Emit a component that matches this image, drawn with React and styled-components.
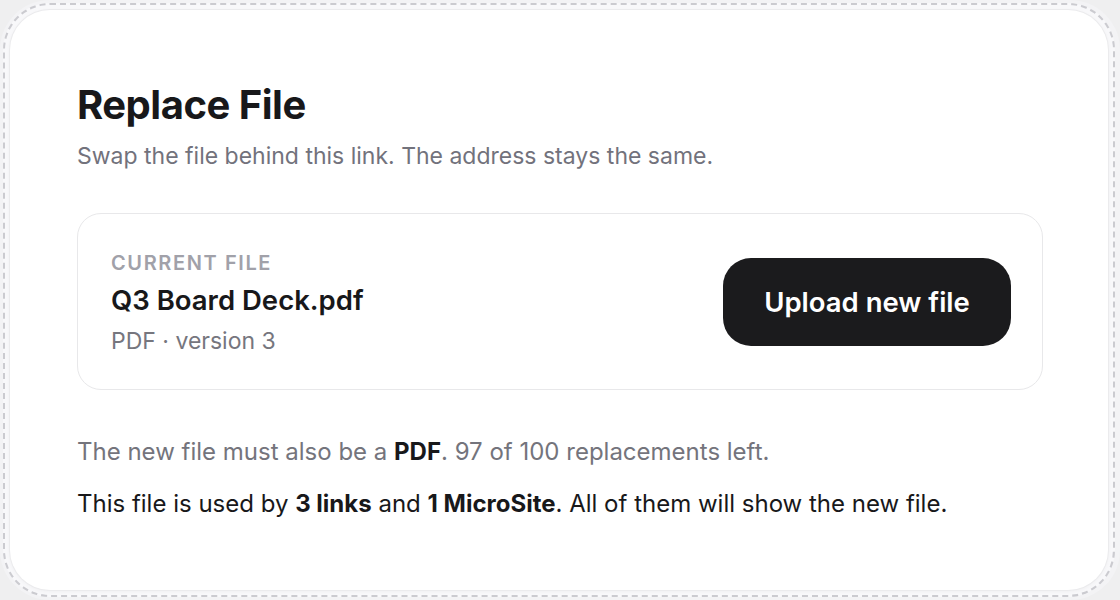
import React from "react";
import styled, { createGlobalStyle } from "styled-components";

const GlobalStyle = createGlobalStyle`
  html, body {
    margin: 0;
    padding: 0;
    background: #efeff0;
  }
  body {
    font-family: Inter, "Noto Sans", sans-serif;
    -webkit-font-smoothing: antialiased;
  }
`;

const Frame = styled.div`
  box-sizing: border-box;
  width: 1120px;
  height: 600px;
  padding: 3px 5px 3px 3px;
  border-radius: 50px;
  background: #f3f3f5;
`;

const DashedRing = styled.div`
  box-sizing: border-box;
  height: 100%;
  padding: 5px;
  border: 2px dashed #cbcbd0;
  border-radius: 47px;
  background: #f8f8fa;
`;

const Card = styled.section`
  box-sizing: border-box;
  height: 100%;
  padding: 71px 65px 0 67px;
  border-radius: 40px;
  background: #fff;
  box-shadow: 0 0 0 1px #ebebed, 0 1px 4px rgba(0, 0, 0, 0.05);
`;

const Title = styled.h1`
  margin: 0;
  font-size: 40px;
  line-height: 48px;
  font-weight: 700;
  letter-spacing: -0.5px;
  color: #18181a;
`;

const Subtitle = styled.p`
  margin: 11px 0 0;
  font-size: 23px;
  line-height: 32px;
  color: #72727c;
`;

const FileBox = styled.div`
  box-sizing: border-box;
  display: flex;
  align-items: center;
  justify-content: space-between;
  margin-top: 41px;
  padding: 0 31px 0 33px;
  height: 177px;
  border: 1.5px solid #e8e8ea;
  border-radius: 24px;
`;

const FileInfo = styled.div`
  display: flex;
  flex-direction: column;
  padding-top: 4px;
`;

const Label = styled.span`
  font-size: 20px;
  line-height: 24px;
  font-weight: 600;
  letter-spacing: 1.6px;
  text-transform: uppercase;
  color: #a1a1a9;
`;

const FileName = styled.span`
  margin-top: 8px;
  font-size: 27.5px;
  line-height: 34px;
  font-weight: 600;
  color: #18181a;
`;

const Meta = styled.span`
  margin-top: 9px;
  font-size: 23px;
  line-height: 30px;
  color: #76767e;
`;

const UploadButton = styled.button`
  width: 288px;
  height: 88px;
  border: none;
  border-radius: 28px;
  background: #1b1b1d;
  color: #fff;
  font-family: inherit;
  font-size: 27.5px;
  font-weight: 600;
  cursor: pointer;
`;

const Note = styled.p`
  margin: ${(p) => p.$top}px 0 0;
  font-size: 24px;
  line-height: 32px;
  color: ${(p) => (p.$muted ? "#74747c" : "#18181a")};

  & b {
    font-weight: 700;
    color: #18181a;
  }
`;

export default function App() {
  return (
    <>
      <GlobalStyle />
      <Frame>
        <DashedRing>
          <Card>
            <Title>Replace File</Title>
            <Subtitle>Swap the file behind this link. The address stays the same.</Subtitle>
            <FileBox>
              <FileInfo>
                <Label>Current file</Label>
                <FileName>Q3 Board Deck.pdf</FileName>
                <Meta>PDF · version 3</Meta>
              </FileInfo>
              <UploadButton>Upload new file</UploadButton>
            </FileBox>
            <Note $muted $top={46}>
              The new file must also be a <b>PDF</b>. 97 of 100 replacements left.
            </Note>
            <Note $top={20}>
              This file is used by <b>3 links</b> and <b>1 MicroSite</b>. All of them will show
              the new file.
            </Note>
          </Card>
        </DashedRing>
      </Frame>
    </>
  );
}
